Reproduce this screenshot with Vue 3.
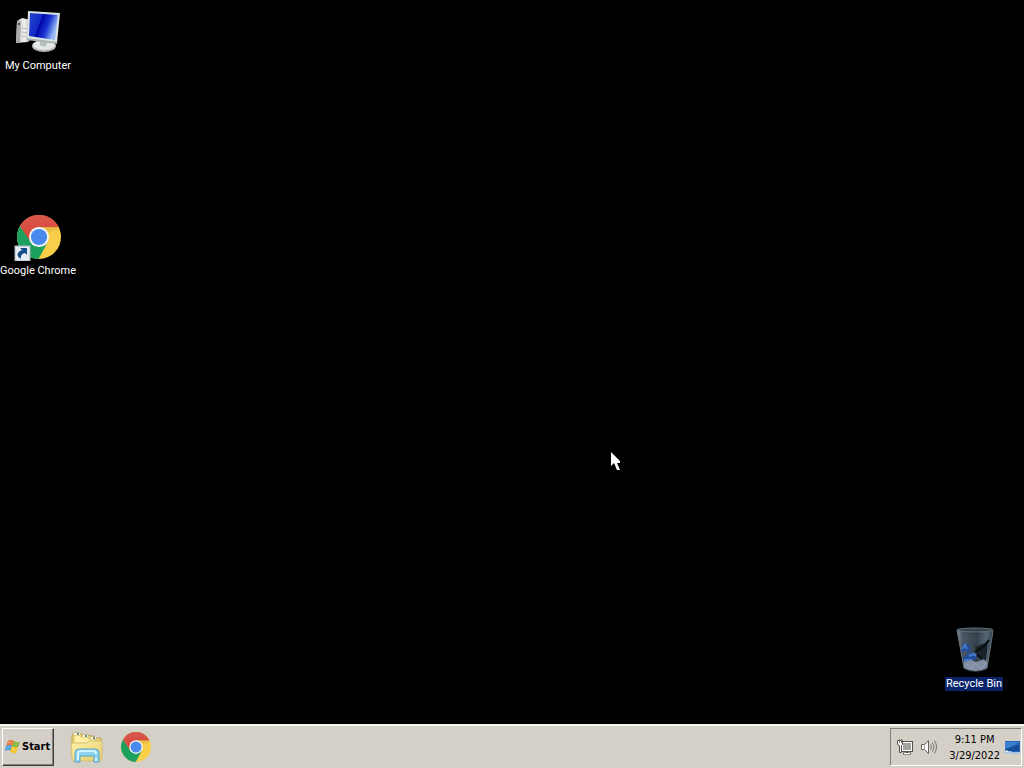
<script setup>
import { ref } from 'vue'

const time = ref('9:11 PM')
const date = ref('3/29/2022')
</script>

<template>
  <div class="screen">
    <svg class="defs" width="0" height="0" aria-hidden="true">
      <defs>
        <linearGradient id="red" x1="0" y1="0" x2="0" y2="1">
          <stop offset="0" stop-color="#d8574b" /><stop offset="1" stop-color="#d94436" />
        </linearGradient>
        <symbol id="chrome" viewBox="0 0 48 48">
          <circle cx="24" cy="24" r="24" fill="#f9ce4b" />
          <path d="M3.200 12A24 24 0 0 1 44.800 12L45.500 13.400H24L13.600 30Z" fill="url(#red)" />
          <path d="M3.200 12A24 24 0 0 0 23.500 48L33.500 29.500L24 34.500L14.500 29Z" fill="#1da05e" />
          <path d="M24 13H45.300L44 17L33 19Z" fill="#d9a83a" opacity=".45" />
          <circle cx="24" cy="24" r="11" fill="#f3f5f5" />
          <circle cx="24" cy="24" r="8.800" fill="#4a89ee" />
        </symbol>
      </defs>
    </svg>

    <main class="desktop">
      <button class="item computer" type="button">
        <svg width="48" height="48" viewBox="0 0 48 48" aria-hidden="true">
          <defs>
            <linearGradient id="screenBlue" x1="0" y1="0" x2="1" y2=".35">
              <stop offset="0" stop-color="#2447cf" /><stop offset=".44" stop-color="#1028c4" />
              <stop offset=".46" stop-color="#0005a8" /><stop offset=".72" stop-color="#1936d2" />
              <stop offset="1" stop-color="#9bbcf4" />
            </linearGradient>
            <linearGradient id="caseGrey">
              <stop offset="0" stop-color="#c5c5c5" /><stop offset=".6" stop-color="#f0f0ee" /><stop offset="1" stop-color="#999" />
            </linearGradient>
          </defs>
          <path d="M3 13L8 10L17 12V31L14 34L2 35Z" fill="url(#caseGrey)" />
          <path d="M3 13L7 13L6 35L2 35Z" fill="#a9aaaa" />
          <path d="M8 20L13 21M8 24L13 25M8 28L13 29" stroke="#bbb" />
          <circle cx="5" cy="16" r="1" fill="#333" />
          <ellipse cx="30" cy="38" rx="12" ry="6" fill="#b4b7b6" />
          <ellipse cx="30" cy="37" rx="11" ry="5" fill="#e5e8e6" />
          <path d="M26 31L34 32L32 38Q29 40 26 37Z" fill="#b6c1bd" />
          <path d="M14 3L46 5L43 35L13 31Z" fill="#dce3e4" />
          <path d="M16 5L44 7L41 32L15 28Z" fill="url(#screenBlue)" />
          <path d="M13 30L43 34L43 36L13 32Z" fill="#aab3b2" />
        </svg>
        <span class="label">My Computer</span>
      </button>

      <button class="item browser" type="button">
        <svg width="48" height="48" viewBox="0 0 48 48" aria-hidden="true">
          <use href="#chrome" x="3" y="2" width="44" height="44" />
          <rect x="1" y="33" width="15" height="15" fill="#e6eef4" />
          <rect x="1" y="33" width="15" height="15" fill="none" stroke="#a9b8c4" />
          <path d="M7 46Q2 43 4 40Q5 38 8 37L6 35H13V42L11 40Q6 41 7 46Z" fill="#164d8c" />
        </svg>
        <span class="label">Google Chrome</span>
      </button>

      <button class="item recycle" type="button">
        <svg width="48" height="48" viewBox="0 0 48 48" aria-hidden="true">
          <defs>
            <linearGradient id="glass">
              <stop offset="0" stop-color="#8a929b" /><stop offset=".15" stop-color="#44515d" />
              <stop offset=".55" stop-color="#29343d" /><stop offset=".82" stop-color="#526171" />
              <stop offset="1" stop-color="#303e49" />
            </linearGradient>
          </defs>
          <path d="M7 3L43 4L37 43Q26 49 14 43Z" fill="url(#glass)" />
          <path d="M9 7L25 8L40 6L36 36L15 38Z" fill="#647888" opacity=".2" />
          <path d="M25 21L38 16L36 34L27 30Z" fill="#182128" />
          <path d="M11 23L14 17L19 19L21 24L17 27L15 24L11 27ZM16 29L22 26L28 29L25 34H19L17 38L12 33Z" fill="#234c99" />
          <path d="M12 23L15 19L17 23M19 30L24 28L26 30M14 34H22" fill="none" stroke="#467bc7" stroke-width="2" />
          <path d="M25 26L33 21L39 14M27 29L32 33" fill="none" stroke="#080d10" stroke-width="2" />
          <path d="M13 36L21 34L26 36L33 34L38 36L36 42Q26 48 14 42Z" fill="#8290a5" />
          <path d="M16 38L22 43L25 37L32 43L35 37" fill="none" stroke="#a8b0bd" opacity=".5" />
          <path d="M7 4L14 42M43 5L37 42" fill="none" stroke="#65727c" />
          <ellipse cx="25" cy="4" rx="18" ry="2" fill="#35434d" stroke="#65737c" />
        </svg>
        <span class="label selected">Recycle Bin</span>
      </button>

      <svg class="pointer" width="12" height="20" viewBox="0 0 12 20" aria-hidden="true">
        <path d="M0 0V14L3 11L6 18H9L6 11H9V9Z" fill="#fff" />
      </svg>
    </main>

    <footer class="taskbar">
      <button class="start" type="button">
        <svg width="16" height="16" viewBox="0 0 16 16" aria-hidden="true">
          <path d="M3 2Q6 0 9 2L7 7Q4 5 1 7Z" fill="#ed7138" />
          <path d="M9 2Q12 4 15 3L13 8Q10 9 7 7Z" fill="#82b63c" />
          <path d="M1 7Q4 5 7 7L6 12Q3 10 0 12Z" fill="#469cdd" />
          <path d="M7 7Q10 9 13 8L11 14Q8 15 5 12Z" fill="#f8c52e" />
          <path d="M3 4Q5 2 7 4M10 5L12 5M2 9Q4 7 5 9M8 10L10 11" fill="none" stroke="#fff" opacity=".45" />
        </svg>
        <span>Start</span>
      </button>

      <nav class="pinned" aria-label="Pinned programs">
        <button type="button" aria-label="File Explorer">
          <svg width="34" height="34" viewBox="0 0 34 34" aria-hidden="true">
            <defs>
              <linearGradient id="folder" x1="0" y1="0" x2="1" y2="1">
                <stop offset="0" stop-color="#fff2aa" /><stop offset="1" stop-color="#e4cb68" />
              </linearGradient>
            </defs>
            <path d="M2 13V5L4 3H10L12 5H18L20 6H24L26 8H31V26H2Z" fill="#e7d27a" stroke="#b9a453" />
            <path d="M4 5H9L11 7H17L19 9H24L26 11H30V27H4Z" fill="#fff0a6" stroke="#d6bf68" />
            <path d="M4 4H10M13 6H18M21 8H26" stroke="#fffbe4" stroke-width="2" />
            <path d="M7 4H9M15 6H17M23 8H25" stroke="#548895" stroke-width="2" />
            <path d="M1 13H17L19 11H32V28L31 31H3L2 28Z" fill="url(#folder)" stroke="#d3c079" />
            <path d="M5 32V23Q5 19 9 19H25Q29 19 29 23V32H24V26H10V32Z" fill="#8ed2ed" stroke="#58a5c9" />
            <path d="M8 30V23Q8 21 11 21H23Q26 21 26 24M26 28V31" fill="none" stroke="#d1f5ff" stroke-width="2" />
          </svg>
        </button>
        <button type="button" aria-label="Google Chrome">
          <svg width="30" height="30" viewBox="0 0 48 48" aria-hidden="true"><use href="#chrome" width="48" height="48" /></svg>
        </button>
      </nav>

      <section class="tray" aria-label="Notification area">
        <button type="button" aria-label="Network">
          <svg width="16" height="16" viewBox="0 0 16 16" aria-hidden="true">
            <rect x="4.500" y="2.500" width="11" height="10" fill="#fff" stroke="#55524e" />
            <rect x="6.500" y="4.500" width="7" height="6" fill="#a5a39f" stroke="#a5a39f" />
            <path d="M6 14.500H14M10 13V14" stroke="#55524e" stroke-width="2" />
            <path d="M7 14.500H13" stroke="#fff" />
            <path d="M.5 1.500V5.500L2.500 6.500V13.500H4.500V6.500L5.500 5.500V1.500Z" fill="#fff" stroke="#55524e" />
            <path d="M2.500 0V4M4.500 0V4" stroke="#77746f" />
          </svg>
        </button>
        <button type="button" aria-label="Volume">
          <svg width="16" height="16" viewBox="0 0 16 16" aria-hidden="true">
            <path d="M.5 5.500H3.500L7.500 1.500V14.500L3.500 10.500H.5Z" fill="#fff" stroke="#66635f" />
            <path d="M3.500 6V10" stroke="#aaa7a3" />
            <path d="M9.500 5.500Q11.500 8 9.500 10.500M11.500 3.500Q14.500 8 11.500 12.500M13.500 1.500Q17.500 8 13.500 14.500" fill="none" stroke="#77746f" />
          </svg>
        </button>
        <button class="clock" type="button"><span>{{ time }}</span><span>{{ date }}</span></button>
        <button type="button" aria-label="Show desktop">
          <svg width="16" height="16" viewBox="0 0 16 16" aria-hidden="true">
            <path d="M1 2H16V14H1Z" fill="#2565b7" />
            <path d="M1 3H15L1 11Z" fill="#3d7fd0" />
            <path d="M1 10L15 6V12H1Z" fill="#174c9a" />
            <path d="M0 12H7L8 13H16V15H7L6 14H0Z" fill="#a8c7e3" /><path d="M1 12H4" stroke="#fff" />
          </svg>
        </button>
      </section>
    </footer>
  </div>
</template>

<style>
body { margin: 0; background: #000; }
</style>

<style scoped>
.screen {
  display: flex;
  flex-direction: column;
  min-height: 100vh;
  background: #000;
  font-family: "DejaVu Sans Condensed", "DejaVu Sans", sans-serif;
  font-size: 11px;
  line-height: 16px;
}
button {
  margin: 0;
  padding: 0;
  border: 0;
  background: none;
  color: inherit;
  font: inherit;
}
svg { display: block; flex: none; }
.defs, .item, .pointer { position: absolute; }
.desktop { position: relative; flex: 1; overflow: hidden; }
.item {
  display: flex;
  flex-direction: column;
  align-items: center;
  width: 76px;
  gap: 3px;
  color: #fff;
  font-family: Roboto, sans-serif;
  line-height: 14px;
}
.computer { left: 0; top: 8px; }
.browser { left: 0; top: 213px; }
.recycle { right: 12px; bottom: 33px; }
.label { white-space: nowrap; }
.selected { padding: 0 1px; background: #0a246a; }
.pointer { left: 611px; top: 452px; }
.taskbar {
  display: flex;
  align-items: stretch;
  box-sizing: border-box;
  min-height: 44px;
  padding: 2px;
  border-top: 2px solid #f5f4f2;
  background: #d4d0c8;
  color: #000;
}
.start {
  display: flex;
  align-items: center;
  gap: 1px;
  padding: 0 3px 0 2px;
  border: 1px solid;
  border-color: #fff #404040 #404040 #fff;
  box-shadow: inset -1px -1px #808080;
  font-weight: bold;
}
.pinned { display: flex; align-items: center; gap: 17px; padding-left: 16px; }
.tray {
  display: flex;
  align-items: center;
  gap: 8px;
  margin-left: auto;
  padding: 0 1px 0 6px;
  border: 1px solid;
  border-color: #808080 #fff #fff #808080;
}
.clock {
  display: flex;
  flex-direction: column;
  align-items: center;
  margin: 0 -4px 0 4px;
  padding-top: 1px;
}
</style>
